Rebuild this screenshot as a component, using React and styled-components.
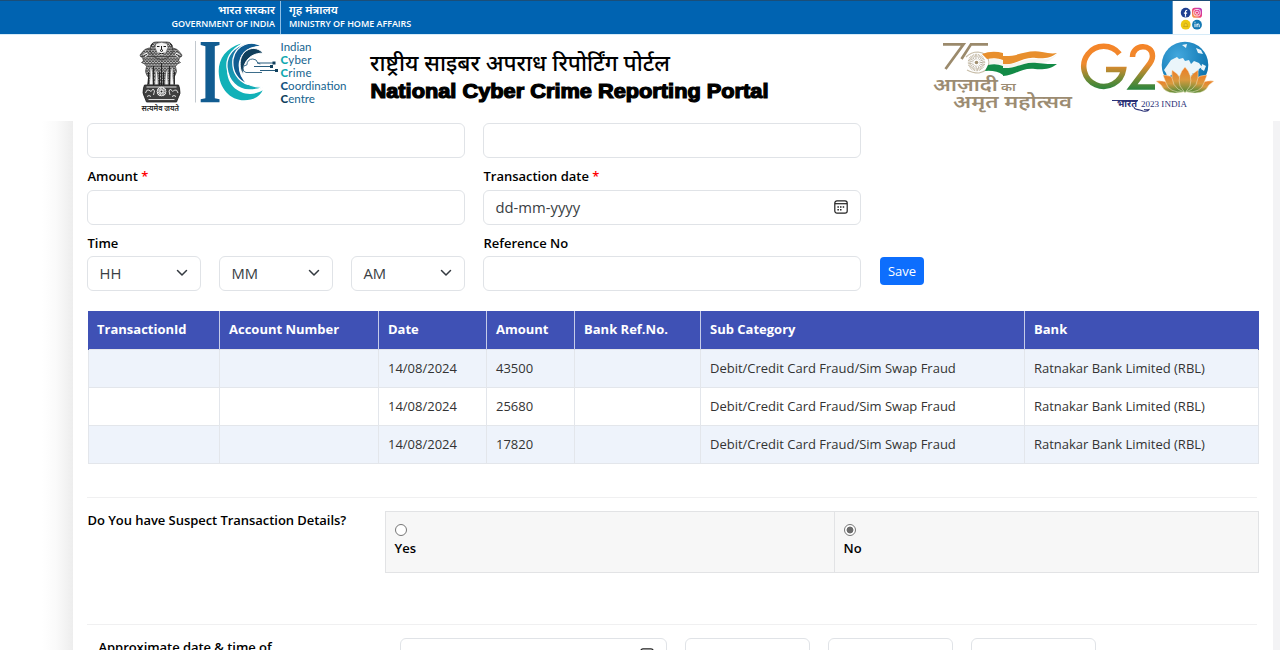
import React from "react";
import styled, { createGlobalStyle } from "styled-components";

const GlobalStyle = createGlobalStyle`
  *, *::before, *::after { box-sizing: border-box; }
  html, body { margin: 0; padding: 0; height: 650px; overflow: hidden; background: #fff; }
  body { font-family: "Open Sans", "Noto Sans", "Liberation Sans", sans-serif; color: #000; }
`;

const Page = styled.div`
  width: 1280px;
  height: 650px;
  overflow: hidden;
  display: flex;
  flex-direction: column;
  background: #fff;
`;

const GovBar = styled.div`
  flex: none;
  height: 35px;
  display: flex;
  background: #0063b1;
  border-top: 1px solid #1b4e78;
  border-bottom: 1px solid #d6ebf8;
  color: #fff;
`;

const GovText = styled.div`
  width: ${(p) => p.$width}px;
  text-align: ${(p) => p.$align || "left"};
  padding: ${(p) => (p.$align === "right" ? "2px 5px 0 0" : "2px 0 0 8px")};
  border-right: ${(p) => (p.$align === "right" ? "1px solid #8fc0e6" : "0")};
  font-weight: 600;
  white-space: nowrap;
`;

const GovHindi = styled.div`
  font-size: 11.500px;
  line-height: 14px;
  height: 14px;
`;

const GovEnglish = styled.div`
  font-size: 9px;
  line-height: 13px;
  letter-spacing: -0.03px;
`;

const Social = styled.div`
  width: 38px;
  padding-top: 1px;
  margin-left: auto;
  margin-right: 70px;
  background: #fff;
  border-left: 1px solid #5b93c0;
  svg { display: block; }
`;

const Masthead = styled.header`
  flex: none;
  height: 86px;
  display: flex;
  padding-left: 137px;
  svg { display: block; flex: none; }
`;

const Titles = styled.div`
  width: 584px;
  padding: 13px 0 0 22px;
  white-space: nowrap;
  svg { overflow: visible; }
`;

const Body = styled.div`
  flex: 1;
  min-height: 0;
  display: flex;
  background: #f3f3f5;
`;

const Shade = styled.div`
  width: 73px;
  background: linear-gradient(90deg, #fff 0, #fff 42px, #fafafa 56px, #ededed 73px);
`;

const Card = styled.main`
  width: 1200px;
  height: 529px;
  overflow: hidden;
  padding: 2px 15px 0 14px;
  background: #fff;
`;

const FormGrid = styled.div`
  display: grid;
  grid-template-columns: 378px 378px 45px;
  column-gap: 18px;
`;

const Field = styled.div`
  display: flex;
  flex-direction: column;
`;

const Label = styled.label`
  height: 31.500px;
  padding-left: .5px;
  line-height: 36px;
  font-size: 13px;
  font-weight: 600;
  letter-spacing: -0.02px;
  white-space: nowrap;
  span { color: #f00; }
`;

const Control = styled.div`
  height: 35px;
  display: flex;
  align-items: center;
  justify-content: space-between;
  padding: 0 12px 1px 11.500px;
  border: 1px solid #e0e3e7;
  border-radius: 6px;
  background: #fff;
  font-size: 14.800px;
  color: #393e43;
`;

const TimeRow = styled.div`
  display: grid;
  grid-template-columns: repeat(3, 114px);
  column-gap: 18px;
`;

const SaveButton = styled.button`
  width: 44px;
  height: 28px;
  margin: 32px 0 0 1px;
  padding: 0;
  border: 0;
  border-radius: 4px;
  background: #0d6efd;
  color: #fff;
  font: 400 13px/28px "Open Sans", "Liberation Sans", sans-serif;
`;

const Table = styled.table`
  width: 1171px;
  margin: 20px 0 0 1px;
  table-layout: fixed;
  border-collapse: collapse;
  font-size: 13px;
`;

const Th = styled.th`
  height: 38px;
  padding: 0 0 1px 9px;
  border: 1px solid #c5cbe9;
  border-width: 0 1px;
  &:first-child { border-left-color: #3f51b5; padding-left: 8px; }
  &:last-child { border-right-color: #3f51b5; }
  background: #3f51b5;
  color: #fff;
  text-align: left;
  font-weight: 700;
`;

const Row = styled.tr`
  height: 38px;
  background: ${(p) => (p.$tinted ? "#eef3fb" : "#fff")};
`;

const Td = styled.td`
  padding: 0 0 1px 9px;
  border: 1px solid #e3e6eb;
  color: #333;
  white-space: nowrap;
  letter-spacing: -0.01px;
`;

const Rule = styled.div`
  height: 1px;
  width: 1170px;
  margin-top: ${(p) => p.$top}px;
  background: #f0f0f1;
`;

const Question = styled.div`
  display: flex;
  justify-content: space-between;
  width: 1172px;
  margin-top: 13px;
`;

const Prompt = styled.div`
  padding-left: .5px;
  font-size: 13px;
  line-height: 18px;
  font-weight: 600;
  letter-spacing: -0.05px;
  white-space: nowrap;
`;

const Choices = styled.div`
  width: 874px;
  height: 62px;
  display: grid;
  grid-template-columns: 448px 1fr;
  border: 1px solid #e2e3e5;
  background: #f7f7f7;
`;

const Choice = styled.label`
  padding: 11px 0 0 8.500px;
  border-left: ${(p) => (p.$divided ? "1px solid #e2e3e5" : "0")};
  font-size: 13px;
  font-weight: 600;
  line-height: 16px;
`;

const Radio = styled.span`
  display: block;
  width: 12px;
  height: 12px;
  margin: 1px 0 4px .5px;
  border: 1px solid #767676;
  border-radius: 50%;
  background: ${(p) => (p.$checked ? "radial-gradient(circle, #6b6b6b 0 3px, #fff 3.8px)" : "#fff")};
`;

const Approximate = styled.div`
  display: flex;
  padding: 13px 0 0 11px;
`;

const ApproxLabel = styled(Prompt)`
  width: 302px;
`;

const ApproxFields = styled.div`
  display: grid;
  grid-template-columns: 267px repeat(3, 125px);
  column-gap: 18px;
`;

const Chevron = () => (
  <svg width="12" height="8" viewBox="0 0 12 8" fill="none" stroke="#343a40" strokeWidth="1.5" strokeLinecap="round" strokeLinejoin="round">
    <path d="M1.500 1.500 6 6l4.500-4.500" />
  </svg>
);

const Calendar = () => (
  <svg width="14" height="14" viewBox="0 0 14 14" fill="none" stroke="#222" strokeWidth="1.200">
    <rect x=".8" y=".8" width="12.400" height="12.400" rx="2.200" />
    <path d="M1 3.700h12" />
    <path d="M6 6.900h1.500M8.700 6.900h1.500M3.400 6.900h1.500M3.400 9.700h1.500M6 9.700h1.500" strokeWidth="1.500" />
  </svg>
);

const SocialIcons = () => (
  <svg width="36" height="32" viewBox="0 0 36 32">
    <defs>
      <linearGradient id="insta" x1="0" y1="1" x2="1" y2="0">
        <stop offset="0" stopColor="#fbb23c" />
        <stop offset=".5" stopColor="#ee3c7b" />
        <stop offset="1" stopColor="#a43bd0" />
      </linearGradient>
    </defs>
    <circle cx="12.700" cy="10.700" r="4.900" fill="#1f3f90" />
    <path d="M12.500 14.700v-5q0-1.500 1.700-1.300M10.900 11.200h3.200" stroke="#fff" strokeWidth="1.200" fill="none" />
    <rect x="19" y="5.700" width="10" height="10" rx="2.800" fill="url(#insta)" />
    <rect x="20.800" y="7.500" width="6.400" height="6.400" rx="2" fill="none" stroke="#fff" strokeWidth=".8" />
    <circle cx="24" cy="10.700" r="1.600" fill="none" stroke="#fff" strokeWidth=".8" />
    <circle cx="12.700" cy="22.700" r="4.900" fill="#eec812" />
    <path d="M10.600 24.500q.8-.6.700-2.200a1.500 1.700 0 0 1 2.800 0q0 1.600.8 2.200z" fill="#f0cf30" stroke="#b89612" strokeWidth=".6" />
    <circle cx="24" cy="22.700" r="4.900" fill="#1479b3" />
    <path d="M22 21.700v3.500M22 19.800v.9M24 25.200v-3.500M24 23.200q.3-1.500 1.500-1.200.8.200.7 1.200v2" stroke="#fff" strokeWidth="1" fill="none" />
  </svg>
);

const Emblem = () => (
  <svg width="58" height="80" viewBox="137 35 58 80">
    <defs>
      <pattern id="mane" width="3" height="3.400" patternUnits="userSpaceOnUse">
        <rect width="3" height="3.400" fill="#b9b9b9" />
        <path d="M0 0q1.500 2.400 3 0M0 1.700q.8 2 1.500 0M1.500 1.700q.8 2 1.500 0" fill="none" stroke="#222" strokeWidth=".75" />
      </pattern>
    </defs>
    <g fill="url(#mane)" stroke="#333" strokeWidth=".7" strokeLinejoin="round">
      <path d="M149 48q-5 1-6.500 4l-2.500 3q0 2 2.500 2.500l1 3.500-2 1.500q4 1 5 4l-1 5q1 4 3 6l-1 7.500h27l-1-7.500q2-2 3-6l-1-5q1-3 5-4l-2-1.500 1-3.500q2.500-.5 2.500-2.500l-2.500-3q-1.500-3-6.500-4z" />
      <path d="M151 45q2-3.500 5-3h11q3-.5 5 3l1 6-4 6-7.500 3-7.500-3-4-6z" />
    </g>
    <g fill="#f3f3f3" stroke="#444" strokeWidth=".5">
      <path d="M156 43.500l5.500-1.200 5.500 1.200 1 4-2.500 6-4 2-4-2-2.500-6z" />
      <path d="M150 67q2 0 2.500 5l.5 13h-3.800q1.500-9 .8-18zM173 67q-2 0-2.500 5l-.5 13h3.800q-1.500-9-.8-18zM155 68q3 4 2.800 9l.4 8h-3.500q1.300-9 .3-17zM168 68q-3 4-2.800 9l-.4 8h3.500q-1.300-9-.3-17z" />
      <path d="M142.500 54l4.500-2 1.500 3-3 2.500zM180.500 54l-4.500-2-1.500 3 3 2.500z" />
    </g>
    <g fill="none" stroke="#1c1c1c" strokeWidth="1">
      <path d="M157 46.500h2.500M163.500 46.500h2.500M161.500 46v3.500l-1.500 1 1.500 1 1.500-1-1.500-1M158.500 53q3 1.500 6 0M153 43.500q-2 1-2 3M170 43.500q2 1 2 3M144 55.500l3-1M179 55.500l-3-1" />
      <path d="M161.500 63v22M153.500 66v19M169.500 66v19M159.500 72v13M163.500 72v13M148.500 72v12M174.500 72v12" strokeWidth=".9" />
    </g>
    <path d="M144.500 85h34l1 3q1.500 6-1 9l-2 5h-30l-2-5q-2.500-4-1-9z" fill="#3f3f3f" stroke="#1c1c1c" strokeWidth=".8" />
    <circle cx="161.500" cy="91.500" r="5.300" fill="#ededed" stroke="#222" strokeWidth=".8" />
    <circle cx="161.500" cy="91.500" r="3.100" fill="none" stroke="#555" strokeWidth="2" strokeDasharray=".7 .8" />
    <circle cx="161.500" cy="91.500" r="1" fill="#222" />
    <path d="M145.500 93q1-4 3.500-3 2 3 4-1l1.500 2-1 4M178 93q-1-4-3.500-3-2 3-4-1l-1.500 2 1 4M147 96.500q2-2 4 0M172 96.500q2-2 4 0M148.500 99.500h26M146.500 87h30" stroke="#ddd" fill="none" strokeWidth="1" />
    <text x="141.500" y="110.500" textLength="37.500" lengthAdjust="spacingAndGlyphs" fontFamily="Noto Sans, sans-serif" fontWeight="600" fontSize="7.500" fill="#222">सत्यमेव जयते</text>
  </svg>
);

const CoordinationLogo = () => (
  <svg width="153" height="80" viewBox="195 35 153 80">
    <defs>
      <linearGradient id="swirl" x1="0" y1="0" x2="0" y2="1">
        <stop offset="0" stopColor="#176a9f" />
        <stop offset=".45" stopColor="#1787ae" />
        <stop offset="1" stopColor="#12b1b8" />
      </linearGradient>
    </defs>
    <path d="M195.500 41v61.500" stroke="#c2c8ce" />
    <path d="M200.700 42h18.800v3l-4.700 1.200v52l4.700 1v3h-18.800v-3l4.700-1v-52l-4.700-1.200z" fill="#115c91" />
    <path d="M241 43.500C226 48 218.500 59 218.700 71.500c.3 17 11.500 28.800 25.500 28.800 9 0 16-4 18.500-10-10 6-21.500 4.500-29.500-3.500C224 77 224 57 241 43.500z" fill="#12b1b8" />
    <path d="M249 42.500c-16 3.500-23 14-22 25 1.500 14 11 22.500 22 22.500 6 0 11-1 13.700-3-10.700.5-20-4-25-11.500C231.500 67 233 52 249 42.500z" fill="url(#swirl)" stroke="#fff" strokeWidth="1.300" />
    <path d="M262 46.500c-10-7-26-2.500-29 12.500-1.500 12.500 5 22 15 25.500-6.500-6-9.500-13.500-8.500-22 2-10.500 10.500-16.500 22.500-16z" fill="#115c91" stroke="#fff" strokeWidth="1.300" />
    <path d="M263 53c-7.500-8.500-20-4.500-22.500 7-1 7 .5 11.500 2.800 14.500C242.500 65 247 53.500 263 53z" fill="#103f5c" stroke="#fff" strokeWidth=".9" />
    <path d="M246 72q-3.200-.5-3-4.200.5-2.800 3.800-2.800.5-6 6-6 4 0 5 3.700l-2 3" fill="#fff" stroke="none" />
    <g fill="none" stroke="#285d7e" strokeWidth=".9">
      <path d="M262 72.500h-16q-3.200-.5-3-4.500.5-3 3.800-3 .5-6 6-6 4 0 5 4l2.500 1" />
      <path d="M257 63h16M254 66.500h16M260 70.500h15" strokeWidth="1.100" />
    </g>
    <path d="M272.500 61.500h3v3h-3zM270 65h3v3h-3zM275 69h3v3h-3z" fill="#103f5c" />
    <g fontFamily="Lato, sans-serif" fontSize="11.500" fill="#15648f">
      <text x="280.500" y="50.500" textLength="31">Indian</text>
      <text x="280.500" y="63.500" textLength="31"><tspan fill="#12a9b0" fontWeight="900">C</tspan>yber</text>
      <text x="280.500" y="76.500" textLength="31"><tspan fill="#12a9b0" fontWeight="900">C</tspan>rime</text>
      <text x="280.500" y="89.500" textLength="66" lengthAdjust="spacingAndGlyphs"><tspan fill="#145380" fontWeight="900">C</tspan>oordination</text>
      <text x="280.500" y="102.500" textLength="34.500" lengthAdjust="spacingAndGlyphs"><tspan fill="#103f5c" fontWeight="900">C</tspan>entre</text>
    </g>
  </svg>
);

const PortalTitle = () => (
  <svg width="402" height="58" viewBox="370 48 402 58">
    <text x="370" y="70.500" textLength="300" lengthAdjust="spacingAndGlyphs" fontFamily="Noto Sans, sans-serif" fontWeight="500" fontSize="22">राष्ट्रीय साइबर अपराध रिपोर्टिंग पोर्टल</text>
    <text x="370.500" y="97.700" textLength="398" lengthAdjust="spacingAndGlyphs" fontFamily="Liberation Sans, sans-serif" fontWeight="700" fontSize="19.500" stroke="#000" strokeWidth="1.200">National Cyber Crime Reporting Portal</text>
  </svg>
);

const AmritLogo = () => (
  <svg width="148" height="80" viewBox="932 35 148 80">
    <g fill="none" stroke="#9b8a6c" strokeWidth="2.700">
      <path d="M943 44.300h20.500L945.500 69" />
      <path d="M988 44.300h-17L961.500 59" />
    </g>
    <path d="M966 57q5-5 12-5 10 1 11 10 0 9-10 11-7 0-12-3" fill="none" stroke="#c8bea9" strokeWidth="1.200" />
    <circle cx="976.500" cy="62.500" r="7.200" fill="none" stroke="#b8ac95" strokeWidth="3" strokeDasharray=".7 .7" />
    <circle cx="976.500" cy="62.500" r="4.500" fill="none" stroke="#aaa08d" strokeWidth="3" strokeDasharray=".5 1.100" />
    <circle cx="976.500" cy="62.500" r="1.800" fill="#a08f70" />
    <path d="M982 54q10-4 21-1v7q-7-3-16-1z" fill="#e88f2d" />
    <path d="M989 59.500q8-2 14 1v5q-7-3-13-1z" fill="#f7f5ee" />
    <path d="M988 65q8-2 15 1v9q-7-5-18-4z" fill="#138a46" />
    <path d="M1003 56c15 1 24-7 39-4 6 1 10 2 15 1-6 5-14 6-21 5-13-2-21 8-33 6z" fill="#e88f2d" />
    <path d="M1003 64c13 2 21-7 34-5 8 1 14 0 20-5-5 7-14 10-21 9-13-2-22 7-33 5z" fill="#f7f5ee" />
    <path d="M1003 68c13 1 21-7 34-5 8 1 14 1 20 1-6 5-15 6-22 5-13-2-21 7-32 7z" fill="#138a46" />
    <g fontFamily="Noto Sans, sans-serif" fill="#9c8c72" fontWeight="600">
      <text x="933" y="91" fontSize="18" textLength="65" lengthAdjust="spacingAndGlyphs">आज़ादी</text>
      <text x="1001" y="91" fontSize="11.500" textLength="15" lengthAdjust="spacingAndGlyphs">का</text>
      <text x="953" y="107.500" fontSize="18" textLength="119" lengthAdjust="spacingAndGlyphs">अमृत महोत्सव</text>
    </g>
  </svg>
);

const G20Logo = () => (
  <svg width="136" height="80" viewBox="1080 35 136 80">
    <defs>
      <linearGradient id="tricolour" gradientUnits="userSpaceOnUse" x1="0" y1="44" x2="0" y2="91">
        <stop offset="0" stopColor="#f58428" />
        <stop offset=".42" stopColor="#ef8a2e" />
        <stop offset=".75" stopColor="#6f8a35" />
        <stop offset="1" stopColor="#21843f" />
      </linearGradient>
      <radialGradient id="ocean" cx=".35" cy=".3" r=".8">
        <stop offset="0" stopColor="#42a7dd" />
        <stop offset="1" stopColor="#056da9" />
      </radialGradient>
      <linearGradient id="petal" x1="0" y1="0" x2="0" y2="1">
        <stop offset="0" stopColor="#ee7c25" />
        <stop offset=".5" stopColor="#d99a3f" />
        <stop offset="1" stopColor="#4d8b38" />
      </linearGradient>
    </defs>
    <g fill="none" stroke="url(#tricolour)" strokeWidth="5.500">
      <path d="M1119.500 54A20 20 0 1 0 1123.500 69.500H1106" />
      <path d="M1132.500 57c0-13 20-14 20-1 0 4-2 7-5 10.500l-15.500 20.500h23" />
    </g>
    <circle cx="1185" cy="65" r="23.300" fill="url(#ocean)" />
    <path d="M1171 60l6-3 2 2 4-1 2 3 4-1 2 4 3-3 5 2 3 4-3 2-2 5-4-1-3 5-3-4-4-2-4 5-3-3-5 1-3 4-2-6-2-3zM1196 48l5 2 2 4-5-1zM1182 45l5-1-1 4zM1202 64l4 2-2 5-3-2z" fill="#eaf5fa" />
    <g fill="url(#petal)" stroke="#f8edcf" strokeWidth=".5">
      <path d="M1156 81q13-2 27 11-17 4-22-7zM1214 81q-13-2-27 11 17 4 22-7z" />
      <path d="M1163 75q14 0 21 17-15 1-18-9zM1207 75q-14 0-21 17 15 1 18-9z" />
      <path d="M1172 70q11 6 12 22-14-4-12-22zM1198 70q-11 6-12 22 14-4 12-22z" />
      <path d="M1185 67q8 8 5 19l-5 7-5-7q-3-11 5-19z" />
    </g>
    <g fontFamily="Liberation Serif, serif" fill="#2b3277">
      <text x="1117" y="107" fontFamily="Noto Sans, sans-serif" fontWeight="700" fontSize="9" textLength="20" lengthAdjust="spacingAndGlyphs">भारत</text>
      <text x="1141" y="107" fontSize="8.500" textLength="46" lengthAdjust="spacingAndGlyphs">2023 INDIA</text>
    </g>
    <path d="M1112 100.500h26M1134 107c0 3 4 2 9 4q5 1 6-1.500-3 .5-5 0" fill="none" stroke="#2b3277" strokeWidth="1.100" />
  </svg>
);

const columns = [
  ["TransactionId", 131],
  ["Account Number", 159],
  ["Date", 108],
  ["Amount", 88],
  ["Bank Ref.No.", 126],
  ["Sub Category", 324],
  ["Bank", 234],
];

const amounts = ["43500", "25680", "17820"];

export default function App() {
  return (
    <>
      <GlobalStyle />
      <Page>
        <GovBar>
          <GovText $width={281} $align="right">
            <GovHindi>भारत सरकार</GovHindi>
            <GovEnglish>GOVERNMENT OF INDIA</GovEnglish>
          </GovText>
          <GovText $width={160}>
            <GovHindi>गृह मंत्रालय</GovHindi>
            <GovEnglish>MINISTRY OF HOME AFFAIRS</GovEnglish>
          </GovText>
          <Social><SocialIcons /></Social>
        </GovBar>
        <Masthead>
          <Emblem />
          <CoordinationLogo />
          <Titles><PortalTitle /></Titles>
          <AmritLogo />
          <G20Logo />
        </Masthead>
        <Body>
          <Shade />
          <Card>
            <FormGrid>
              <Field><Control /></Field>
              <Field><Control /></Field>
              <div />
              <Field>
                <Label>Amount <span>*</span></Label>
                <Control />
              </Field>
              <Field>
                <Label>Transaction date <span>*</span></Label>
                <Control>dd-mm-yyyy<Calendar /></Control>
              </Field>
              <div />
              <Field>
                <Label>Time</Label>
                <TimeRow>
                  {["HH", "MM", "AM"].map((t) => (
                    <Control key={t}>{t}<Chevron /></Control>
                  ))}
                </TimeRow>
              </Field>
              <Field>
                <Label>Reference No</Label>
                <Control />
              </Field>
              <SaveButton>Save</SaveButton>
            </FormGrid>
            <Table>
              <colgroup>
                {columns.map(([name, width]) => <col key={name} width={width} />)}
              </colgroup>
              <thead>
                <tr>{columns.map(([name]) => <Th key={name}>{name}</Th>)}</tr>
              </thead>
              <tbody>
                {amounts.map((amount, i) => (
                  <Row key={amount} $tinted={i % 2 === 0}>
                    <Td /><Td />
                    <Td>14/08/2024</Td>
                    <Td>{amount}</Td>
                    <Td />
                    <Td>Debit/Credit Card Fraud/Sim Swap Fraud</Td>
                    <Td>Ratnakar Bank Limited (RBL)</Td>
                  </Row>
                ))}
              </tbody>
            </Table>
            <Rule $top={33} />
            <Question>
              <Prompt>Do You have Suspect Transaction Details?</Prompt>
              <Choices>
                <Choice><Radio />Yes</Choice>
                <Choice $divided><Radio $checked />No</Choice>
              </Choices>
            </Question>
            <Rule $top={51} />
            <Approximate>
              <ApproxLabel>Approximate date &amp; time of</ApproxLabel>
              <ApproxFields>
                <Control>dd-mm-yyyy<Calendar /></Control>
                <Control /><Control /><Control />
              </ApproxFields>
            </Approximate>
          </Card>
        </Body>
      </Page>
    </>
  );
}
